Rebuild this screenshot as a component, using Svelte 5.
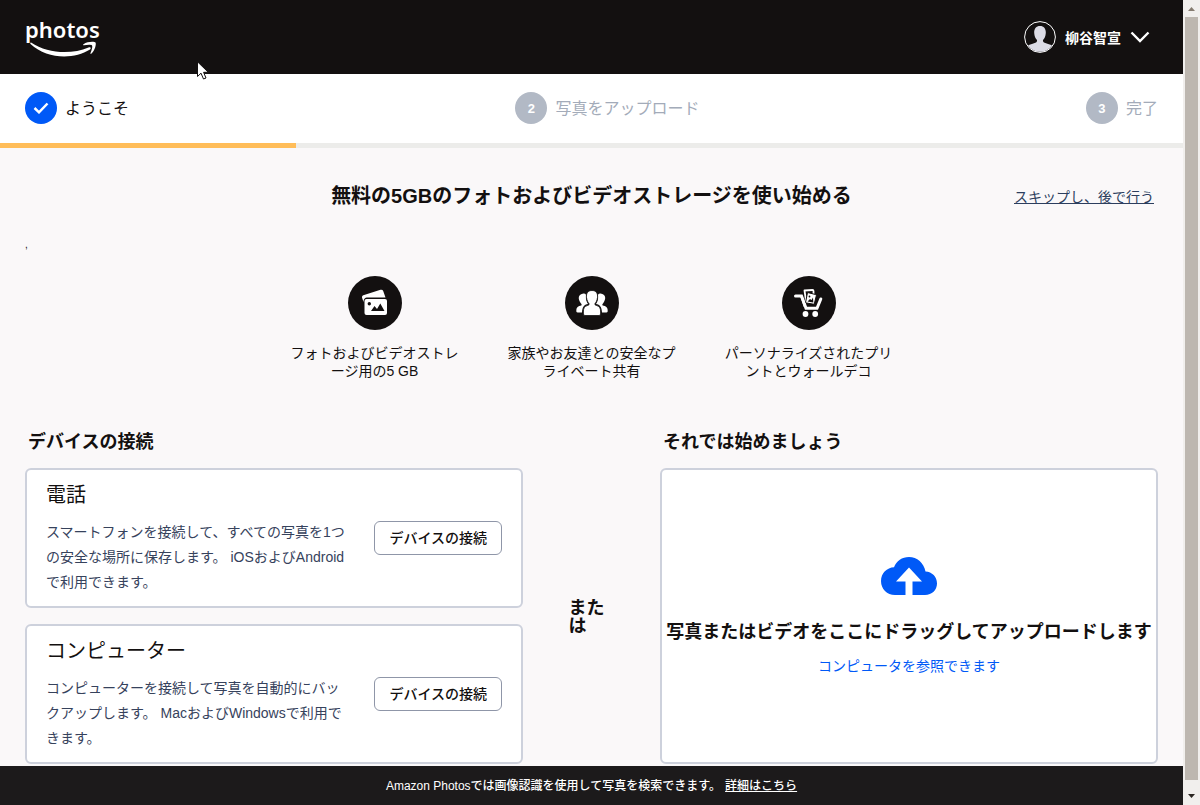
<script>
	const steps = [
		{ number: 1, label: 'ようこそ', done: true },
		{ number: 2, label: '写真をアップロード', done: false },
		{ number: 3, label: '完了', done: false }
	];

	const features = [
		{ icon: 'storage', text: 'フォトおよびビデオストレージ用の5 GB' },
		{ icon: 'people', text: '家族やお友達との安全なプライベート共有' },
		{ icon: 'cart', text: 'パーソナライズされたプリントとウォールデコ' }
	];

	const devices = [
		{
			title: '電話',
			text: 'スマートフォンを接続して、すべての写真を1つの安全な場所に保存します。 iOSおよびAndroidで利用できます。'
		},
		{
			title: 'コンピューター',
			text: 'コンピューターを接続して写真を自動的にバックアップします。 MacおよびWindowsで利用できます。'
		}
	];

	let progress = 25;
</script>

<div class="window">
	<div class="page">
		<header class="header">
			<a href="#home" class="logo">
				<span class="logo__text">photos</span>
				<svg class="logo__smile" viewBox="0 0 68 17" width="68" height="17" aria-hidden="true">
					<path d="M1 1.500 C18 13 42 13.500 58.500 6.500 C60.500 5.800 61.500 7.300 60 8.500 C43 19 17 18 .5 3 C0 2.200 .4 1.200 1 1.500Z" />
					<path d="M53.500 3.200 C57 .5 64.500 .2 65.500 1.500 C66.500 3 65 9.500 61.500 12.600 C60.800 13.200 60.200 12.800 60.500 12 C61.600 9.500 62.800 5.500 62 4.500 C61.200 3.500 57 3.900 54 4.300 C53 4.400 52.800 3.700 53.500 3.200Z" />
				</svg>
			</a>
			<button class="account">
				<svg viewBox="0 0 32 32" width="32" height="32" aria-hidden="true">
					<circle cx="16" cy="16" r="15.400" fill="#131010" stroke="#fff" />
					<path
						d="M16 5 C20 5 22 8 21.800 12 C21.600 15.500 20.500 17.500 19 19 C18.800 21 19.500 21.500 22 22.300 C25 23.200 27 24 28 24.500 A14.500 14.500 0 0 1 4 24.500 C5 24 7 23.200 10 22.300 C12.500 21.500 13.200 21 13 19 C11.500 17.500 10.400 15.500 10.200 12 C10 8 12 5 16 5Z"
						fill="#dcdce6"
					/>
				</svg>
				<span>柳谷智宣</span>
				<svg viewBox="0 0 20 12" width="20" height="12" aria-hidden="true">
					<path d="M1.500 1.500 L10 10 L18.500 1.500" fill="none" stroke="#fff" stroke-width="2.400" />
				</svg>
			</button>
			<svg class="pointer" viewBox="0 0 12 19" width="12" height="19" aria-hidden="true">
				<path d="M.5 .8 V15.500 L4 12.200 L6.500 18 L9 17 L6.600 11.300 H11.300Z" fill="#fff" stroke="#131010" />
			</svg>
		</header>

		<ol class="steps">
			{#each steps as step}
				<li class="step" class:done={step.done}>
					<span class="step__badge">
						{#if step.done}
							<svg viewBox="0 0 16 12" width="16" height="12" aria-hidden="true">
								<path d="M1.500 6 L6 10.300 L14.500 1.500" fill="none" stroke="#fff" stroke-width="2.500" />
							</svg>
						{:else}
							{step.number}
						{/if}
					</span>
					<span class="step__label">{step.label}</span>
				</li>
			{/each}
		</ol>
		<div class="progress">
			<div class="progress__bar" style="width: {progress}%"></div>
		</div>

		<main>
			<div class="intro">
				<h1>無料の5GBのフォトおよびビデオストレージを使い始める</h1>
				<a href="#skip">スキップし、後で行う</a>
			</div>
			<p class="note">,</p>

			<ul class="features">
				{#each features as feature}
					<li>
						<svg viewBox="0 0 54 54" width="54" height="54" aria-hidden="true">
							<circle cx="27" cy="27" r="27" fill="#131010" />
							{#if feature.icon === 'storage'}
								<path d="M14 21.500 Q13.800 19.800 15.300 19.300 L32.500 13.800 Q34.500 13.300 35.200 15 L37.500 21.500 H18.500 Q15.500 22 15.500 26Z" fill="#fff" />
								<rect x="16.500" y="23" width="22.500" height="16" rx="2" fill="#fff" />
								<circle cx="21.300" cy="27.800" r="1.700" fill="#131010" />
								<path d="M23 35 L26.500 30 L29 33 L32.300 27.500 L36.500 35Z" fill="#131010" />
							{:else if feature.icon === 'people'}
								<g fill="#fff">
									<path d="M18.500 17.500 C20.200 17.300 21 18 21 19.500 C20.500 23 21.500 26 23 28 C19 28.500 17.300 31 17 36.500 H12.500 Q11 36.500 11.300 34 C11.500 31.300 13 30 16.300 29.500 C16.800 29 16.800 28.300 16 27.500 C12.500 23 13 18 18.500 17.500Z" />
									<path d="M35.500 17.500 C33.800 17.300 33 18 33 19.500 C33.500 23 32.500 26 31 28 C35 28.500 36.700 31 37 36.500 H41.500 Q43 36.500 42.700 34 C42.500 31.300 41 30 37.700 29.500 C37.200 29 37.200 28.300 38 27.500 C41.500 23 41 18 35.500 17.500Z" />
									<path
										d="M27 14.500 C31.500 14.500 33 18 32.500 21.500 C32 24.800 31 26.500 30 27.500 C29.800 29 30.300 29.200 31.500 29.500 C34.800 30.200 35.600 32.500 35.600 36 V38 Q35.600 39.500 34 39.500 H20 Q18.400 39.500 18.400 38 V36 C18.400 32.500 19.200 30.200 22.500 29.500 C23.700 29.200 24.200 29 24 27.500 C23 26.500 22 24.800 21.500 21.500 C21 18 22.500 14.500 27 14.500Z"
										stroke="#131010"
										stroke-width=".8"
									/>
								</g>
							{:else}
								<path d="M13.500 20 H19.500 L24 32.300 H35 L38.800 23" fill="none" stroke="#fff" stroke-width="3" stroke-linecap="round" />
								<path d="M18 20 H20.500 L23.500 27.500 V31 H21.800Z" fill="#fff" />
								<circle cx="23.500" cy="38" r="2.900" fill="#fff" />
								<circle cx="33.200" cy="38" r="2.900" fill="#fff" />
								<path d="M22.500 14.500 L30.500 14 Q31.500 14 31.500 15 V23 L24 24.500Z" fill="#131010" stroke="#fff" stroke-width="1.800" stroke-linejoin="round" />
								<path d="M25.500 16.500 L33.500 18.500 Q34.500 18.800 34.300 19.800 L32.200 28.300 L24.500 27 Q23.500 26.800 23.700 25.800Z" fill="#fff" stroke="#131010" />
								<path d="M25.500 25.500 L28 23 L29.500 24 L31 21.500 L31.300 26.600Z" fill="#131010" />
								<circle cx="27.500" cy="20.500" r=".9" fill="#131010" />
							{/if}
						</svg>
						<p>{feature.text}</p>
					</li>
				{/each}
			</ul>

			<div class="columns">
				<section>
					<h2>デバイスの接続</h2>
					<div class="cards">
						{#each devices as device}
							<article class="card">
								<h3>{device.title}</h3>
								<div class="card__body">
									<p>{device.text}</p>
									<button>デバイスの接続</button>
								</div>
							</article>
						{/each}
					</div>
				</section>
				<div class="or"><span>または</span></div>
				<section>
					<h2>それでは始めましょう</h2>
					<div class="drop">
						<svg viewBox="0 0 56 38" width="56" height="38" aria-hidden="true">
							<path d="M14 38 C6 38 0 32 0 24 C0 16 6 10.500 13 10.200 C15.500 4 21 0 28 0 C36 0 43 6 44.500 14.500 C51 15 56 19.500 56 26.500 C56 33 51 38 44 38Z" fill="#0059f7" />
							<path d="M28 10.500 L41 24.500 H31.500 V38 H24.500 V24.500 H15Z" fill="#fff" />
						</svg>
						<strong>写真またはビデオをここにドラッグしてアップロードします</strong>
						<a href="#browse">コンピュータを参照できます</a>
					</div>
				</section>
			</div>
		</main>

		<footer>
			<span>Amazon Photosでは画像認識を使用して写真を検索できます。</span>
			<a href="#more">詳細はこちら</a>
		</footer>
	</div>

	<div class="scroll" aria-hidden="true">
		<svg viewBox="0 0 17 17" width="17" height="17"><path d="M5 11 L8.500 7 L12 11Z" fill="#857b70" /></svg>
		<div class="scroll__thumb"></div>
		<svg viewBox="0 0 17 17" width="17" height="17"><path d="M5 6 L8.500 10 L12 6Z" fill="#2b2622" /></svg>
	</div>
</div>

<style>
	:global(body) {
		font-family: 'Liberation Sans', 'Noto Sans CJK JP', sans-serif;
		font-size: 14px;
		color: #131010;
		background-color: #faf8f9;
	}

	h1,
	h2,
	h3,
	p,
	ol,
	ul {
		margin: 0;
		padding: 0;
		list-style: none;
	}

	button {
		font: inherit;
		cursor: pointer;
	}

	.window {
		display: grid;
		grid-template-columns: 1fr 17px;
		min-height: 100vh;
	}

	.page {
		display: flex;
		flex-direction: column;
	}

	/** Header **/
	.header {
		position: relative;
		display: flex;
		align-items: center;
		justify-content: space-between;
		height: 74px;
		padding: 0 33px 0 25px;
		background-color: #131010;
	}

	.logo {
		display: flex;
		flex-direction: column;
		color: white;
		text-decoration: none;
	}

	.logo__text {
		font-family: 'Noto Sans', sans-serif;
		font-size: 22px;
		font-weight: 600;
		line-height: 24px;
	}

	.logo__smile {
		margin-left: 5px;
		fill: white;
	}

	.account {
		display: flex;
		align-items: center;
		gap: 9px;
		padding: 0;
		border: none;
		background: none;
		color: white;
		font-weight: 700;
	}

	.pointer {
		position: absolute;
		left: 197px;
		top: 61px;
	}

	/** Steps **/
	.steps {
		display: flex;
		justify-content: space-between;
		padding: 18px 25px 19px;
		background-color: white;
	}

	.step {
		display: flex;
		align-items: center;
		gap: 8px;
		font-size: 16px;
		color: #a3abb9;
	}

	.step.done {
		color: #131010;
	}

	.step__label {
		padding-bottom: 2px;
	}

	.step__badge {
		display: flex;
		align-items: center;
		justify-content: center;
		width: 32px;
		height: 32px;
		border-radius: 50%;
		background-color: #b2b9c5;
		color: white;
		font-size: 13px;
		font-weight: 700;
	}

	.done .step__badge {
		background-color: #0059f7;
	}

	.progress {
		height: 5px;
		background-color: #ececea;
	}

	.progress__bar {
		height: 100%;
		background-color: #ffbd59;
	}

	/** Intro **/
	main {
		flex: 1;
		padding: 33px 25px 2px;
	}

	.intro {
		display: grid;
		grid-template-columns: 1fr auto 1fr;
		align-items: center;
	}

	.intro h1 {
		grid-column: 2;
		font-size: 20px;
		line-height: 30px;
	}

	.intro a {
		justify-self: end;
		padding-right: 4px;
		color: #2c3e5e;
	}

	.note {
		padding-top: 28px;
		font-size: 10px;
		line-height: 12px;
	}

	.features {
		display: flex;
		justify-content: center;
		gap: 48px;
		padding-top: 25px;
	}

	.features li {
		display: flex;
		flex-direction: column;
		align-items: center;
		gap: 14px;
		width: 169px;
		line-height: 18px;
		text-align: center;
		line-break: anywhere;
	}

	/** Columns **/
	.columns {
		display: grid;
		grid-template-columns: 1fr 137px 1fr;
		padding-top: 49px;
	}

	h2 {
		padding: 0 3px 13px;
		font-size: 18px;
		line-height: 26px;
	}

	section {
		display: flex;
		flex-direction: column;
	}

	.cards {
		display: grid;
		gap: 16px;
	}

	.card,
	.drop {
		border: 2px solid #cdd1dc;
		border-radius: 6px;
		background-color: white;
	}

	.card {
		padding: 9px 19px 11px;
	}

	.card h3 {
		font-size: 20px;
		font-weight: 400;
		line-height: 32px;
	}

	.card__body {
		display: flex;
		align-items: flex-start;
		gap: 24px;
		padding-top: 9px;
	}

	.card p {
		flex: 1;
		line-height: 25px;
		color: #36425c;
	}

	.card button {
		flex: none;
		height: 34px;
		margin-top: 1px;
		padding: 0 14px 2px;
		border: 1px solid #8f96a8;
		border-radius: 6px;
		background-color: white;
		color: #131010;
		font-weight: 500;
	}

	.or {
		display: flex;
		align-items: center;
		justify-content: center;
		padding-top: 41px;
		font-size: 18px;
		font-weight: 700;
		line-height: 18px;
	}

	.or span {
		width: 46px;
	}

	.drop {
		display: flex;
		flex: 1;
		flex-direction: column;
		align-items: center;
		justify-content: center;
		padding-top: 2px;
	}

	.drop strong {
		padding: 24px 0 10px;
		font-size: 18px;
		line-height: 26px;
	}

	.drop a {
		color: #0059f7;
		line-height: 22px;
		text-decoration: none;
	}

	/** Footer **/
	footer {
		display: flex;
		align-items: center;
		justify-content: center;
		gap: 4px;
		height: 37px;
		padding-bottom: 2px;
		background-color: #1c1a1b;
		color: white;
		font-size: 12px;
		font-weight: 500;
	}

	footer a {
		color: white;
	}

	/** Scrollbar **/
	.scroll {
		display: flex;
		flex-direction: column;
		background-color: #f1efed;
	}

	.scroll__thumb {
		flex: 1;
		margin: 0 2px 8px;
		background-color: #bdb7b0;
	}
</style>
